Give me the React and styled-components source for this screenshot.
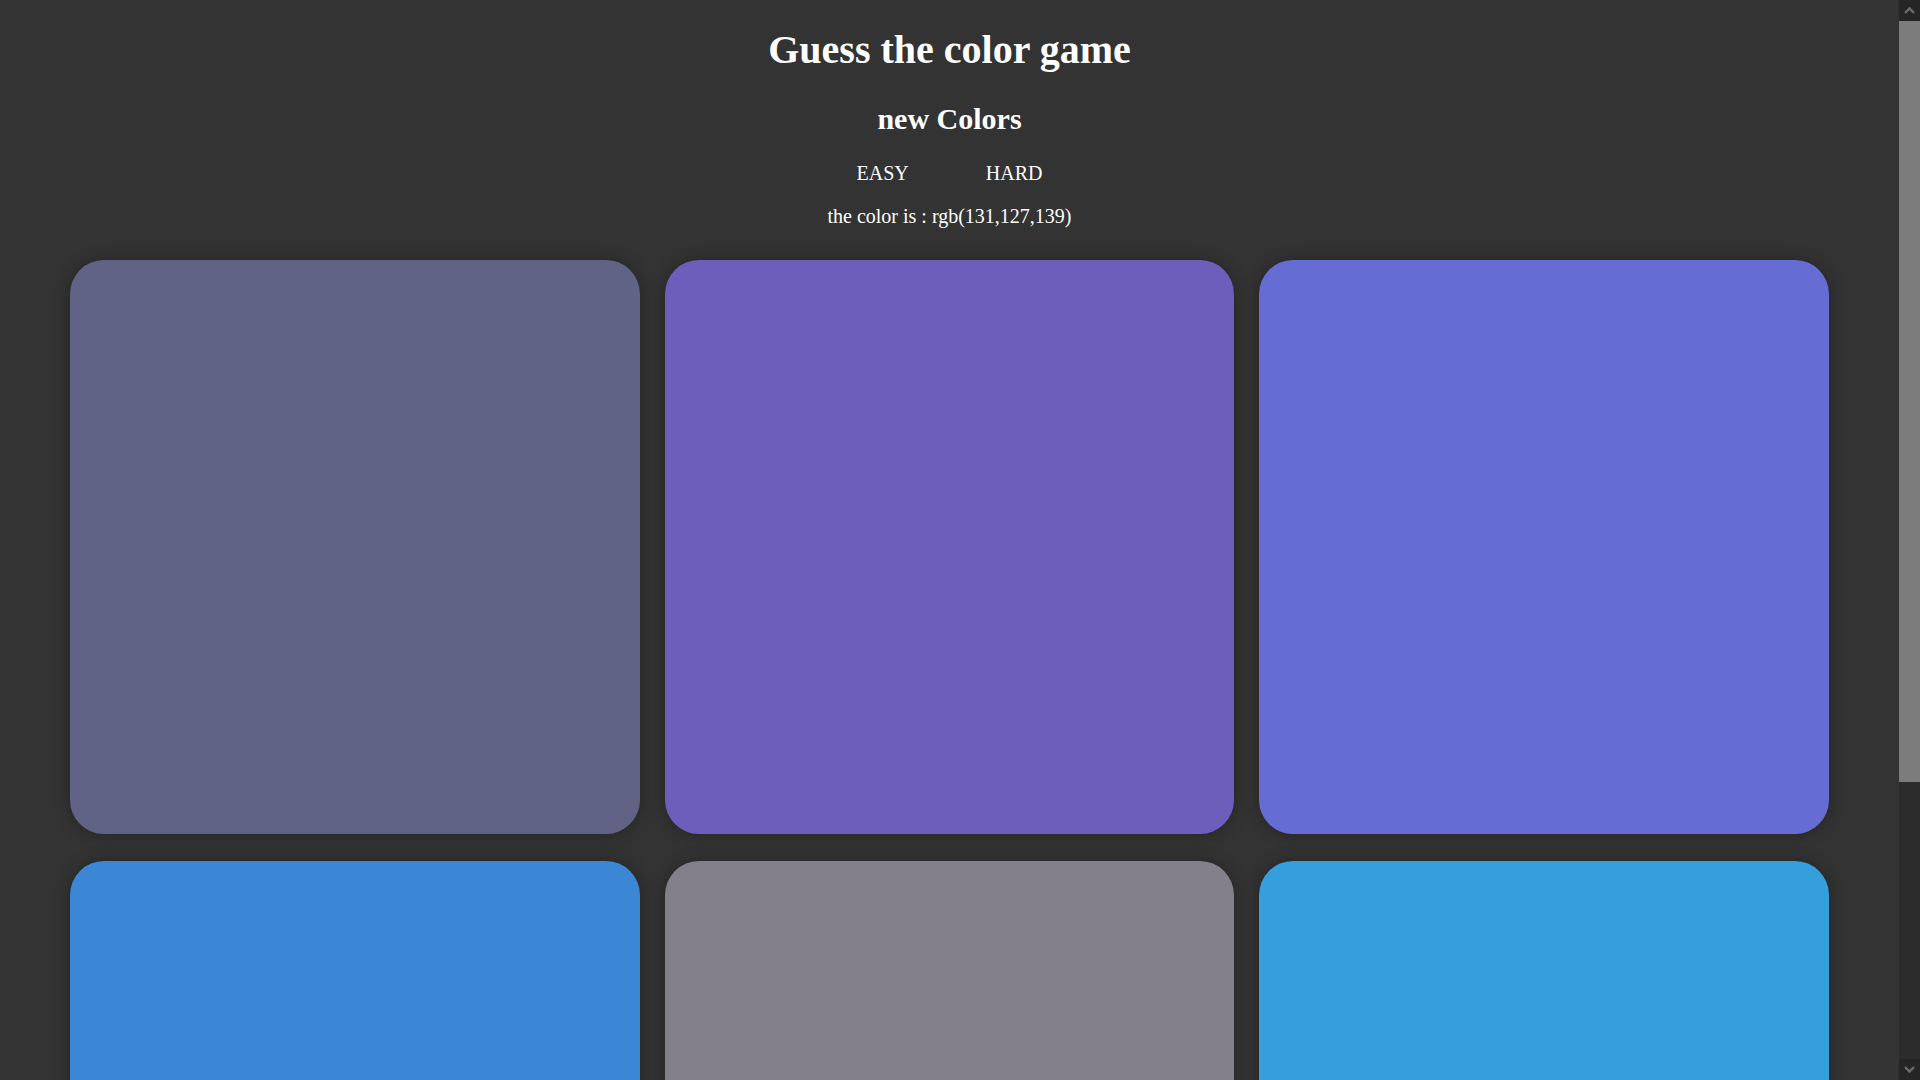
import React, { useLayoutEffect, useRef, useState } from "react";
import styled, { createGlobalStyle } from "styled-components";

const palette = {
  page: `#333333`,
  text: `#ffffff`,
  rail: `#2c2c2d`,
  railButton: `#252526`,
  thumb: `#7c7c7d`,
  arrow: `#6c6c6c`,
};

const GlobalStyle = createGlobalStyle`
  html, body {
    margin: 0;
    height: 100%;
    overflow: hidden;
    background: ${palette.page};
  }
  body {
    color: ${palette.text};
    font-family: "Liberation Serif", "Times New Roman", serif;
  }
`;

const Window = styled.div`
  display: flex;
  height: 100vh;
`;

const Viewport = styled.div`
  flex: 1;
  min-width: 0;
  overflow-y: auto;
  scrollbar-width: none;
  &::-webkit-scrollbar {
    display: none;
  }
`;

const Rail = styled.div`
  display: flex;
  flex-direction: column;
  width: 21px;
  flex-shrink: 0;
  background: ${palette.rail};
`;

const RailButton = styled.div`
  display: flex;
  align-items: center;
  justify-content: center;
  height: 21px;
  flex-shrink: 0;
  background: ${palette.railButton};
`;

const Track = styled.div`
  flex: 1;
`;

const Thumb = styled.div`
  background: ${palette.thumb};
`;

const Page = styled.div`
  padding: 27px 70px 39px;
  text-align: center;
`;

const Title = styled.h1`
  margin: 0;
  font-size: 40px;
  line-height: 46px;
  font-weight: bold;
`;

const NewColors = styled.h2`
  margin: 29px 0 0;
  font-size: 30px;
  line-height: 34.5px;
  font-weight: bold;
  cursor: pointer;
`;

const Modes = styled.div`
  display: flex;
  justify-content: center;
  gap: 77px;
  margin-top: 25px;
`;

const ModeButton = styled.button`
  padding: 0;
  border: none;
  background: none;
  color: ${palette.text};
  font-family: inherit;
  font-size: 20px;
  line-height: 23px;
  cursor: pointer;
`;

const Target = styled.p`
  margin: 20px 0 0;
  font-size: 20px;
  line-height: 23px;
`;

const Board = styled.div`
  display: grid;
  grid-template-columns: repeat(3, 1fr);
  grid-auto-rows: 574px;
  column-gap: 25px;
  row-gap: 27px;
  margin-top: 32px;
`;

const Square = styled.div`
  border-radius: 34px;
  background: ${(p) => p.$color};
  box-shadow: 0 0 16px rgba(0, 0, 0, 0.3);
  cursor: pointer;
`;

const colors = [
  "#606385",
  "#6d5ebc",
  "#666dd2",
  "#3b87d5",
  "#837f8b",
  "#359edd",
];

const Chevron = ({ up }) => (
  <svg width="11" height="7" viewBox="0 0 11 7">
    <path
      d={up ? "M1 6 L5.5 1.5 L10 6" : "M1 1 L5.5 5.5 L10 1"}
      fill="none"
      stroke={palette.arrow}
      strokeWidth="2.4"
    />
  </svg>
);

export default function App() {
  const [mode, setMode] = useState("hard");
  const [thumb, setThumb] = useState({ top: 0, height: 0 });
  const viewRef = useRef(null);
  const trackRef = useRef(null);

  const measure = () => {
    const v = viewRef.current;
    const t = trackRef.current;
    if (!v || !t) return;
    const h = t.clientHeight;
    setThumb({
      top: (v.scrollTop / v.scrollHeight) * h,
      height: (v.clientHeight / v.scrollHeight) * h,
    });
  };

  useLayoutEffect(() => {
    measure();
    window.addEventListener("resize", measure);
    return () => window.removeEventListener("resize", measure);
  }, []);

  return (
    <>
      <GlobalStyle />
      <Window>
        <Viewport ref={viewRef} onScroll={measure}>
          <Page>
            <Title>Guess the color game</Title>
            <NewColors>new Colors</NewColors>
            <Modes>
              <ModeButton onClick={() => setMode("easy")}>EASY</ModeButton>
              <ModeButton onClick={() => setMode("hard")}>HARD</ModeButton>
            </Modes>
            <Target>the color is : rgb(131,127,139)</Target>
            <Board>
              {(mode === "easy" ? colors.slice(0, 3) : colors).map((c, i) => (
                <Square key={i} $color={c} />
              ))}
            </Board>
          </Page>
        </Viewport>
        <Rail>
          <RailButton>
            <Chevron up />
          </RailButton>
          <Track ref={trackRef}>
            <Thumb style={{ marginTop: thumb.top, height: thumb.height }} />
          </Track>
          <RailButton>
            <Chevron />
          </RailButton>
        </Rail>
      </Window>
    </>
  );
}
